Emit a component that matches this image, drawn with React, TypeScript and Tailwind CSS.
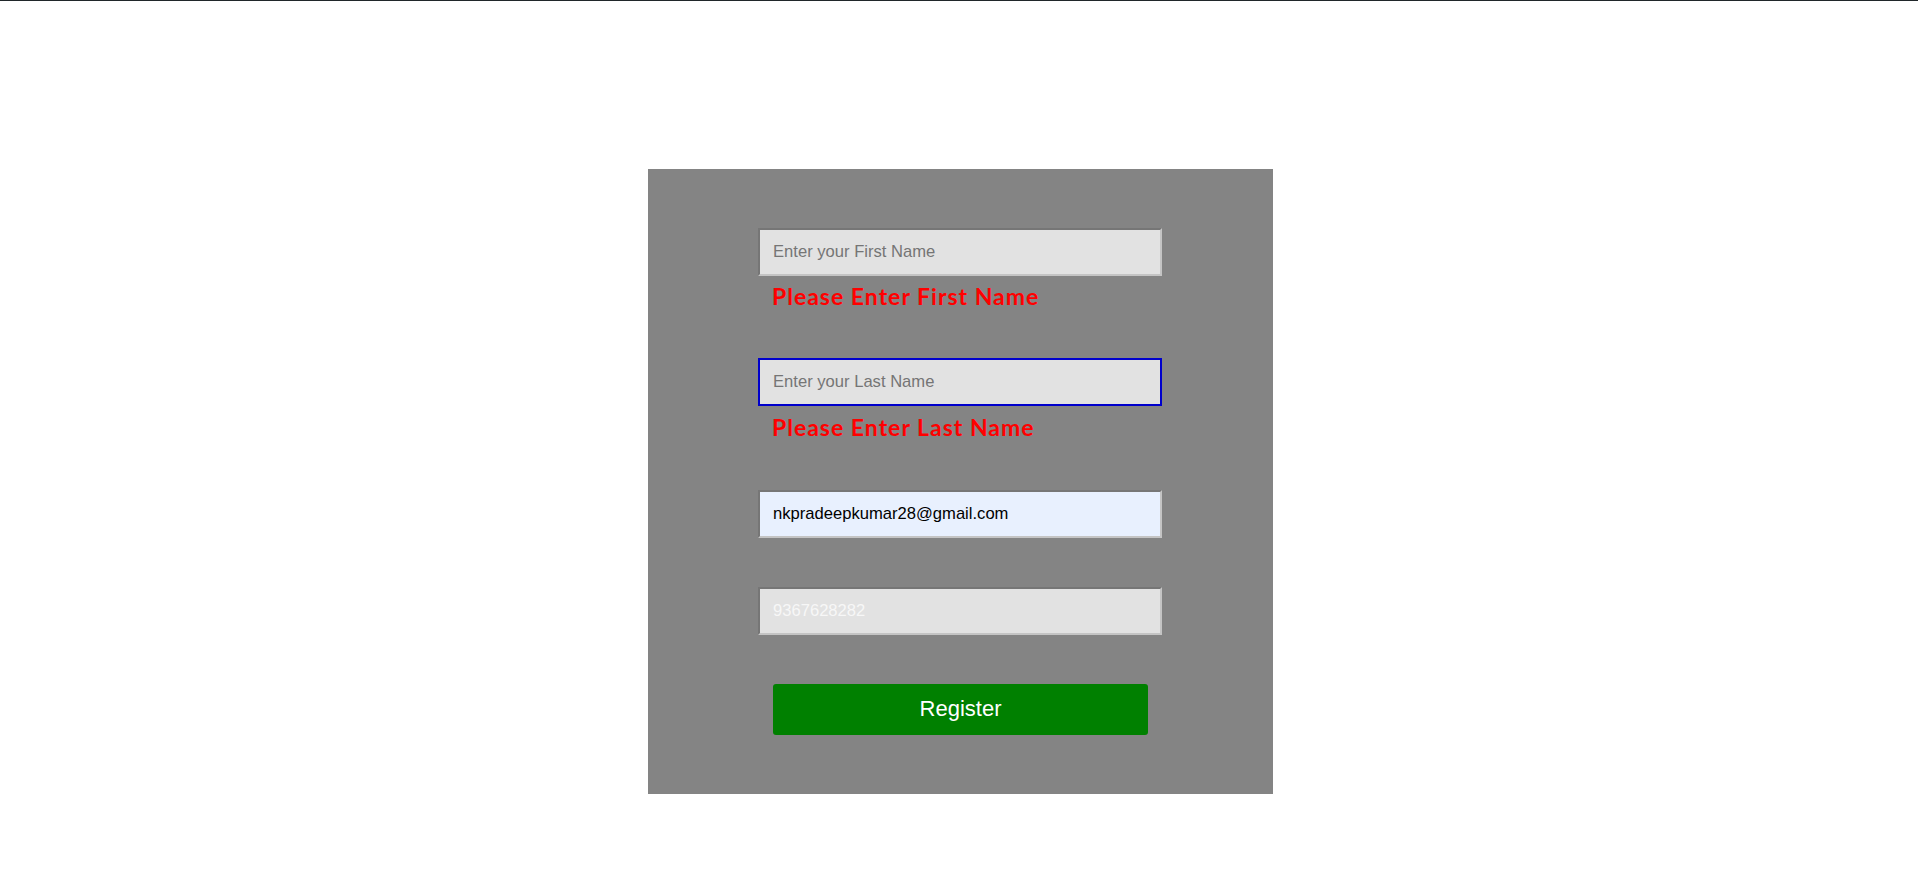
import React from "react";

const inputBase =
  "block w-[404px] h-[48px] px-[13px] text-[16.6px] outline-none [font-family:'Liberation_Sans',Arial,sans-serif]";
const insetBorder =
  "border-2 border-solid border-t-[#767676] border-l-[#767676] border-b-[#c4c4c4] border-r-[#c4c4c4]";

function ErrorText({ children, mt }: { children: React.ReactNode; mt: string }) {
  return (
    <p
      className={`w-[404px] pl-[14px] h-[28px] leading-[28px] text-[23px] font-bold tracking-[1px] text-[#ff0000] [font-family:Lato,'Noto_Sans',sans-serif] ${mt}`}
    >
      {children}
    </p>
  );
}

export default function App() {
  return (
    <div className="min-h-[877px] w-full bg-white border-t border-[#20272a]">
      <div className="pl-[648px] pt-[168px]">
        <form
          className="w-[625px] h-[625px] bg-[#848484] flex flex-col items-start pl-[110px] pt-[59px]"
          onSubmit={(e) => e.preventDefault()}
        >
          <input
            type="text"
            placeholder="Enter your First Name"
            readOnly
            className={`${inputBase} ${insetBorder} bg-[#e2e2e2] placeholder:text-[#757575]`}
          />
          <ErrorText mt="mt-[6px]">Please Enter First Name</ErrorText>

          <input
            type="text"
            placeholder="Enter your Last Name"
            readOnly
            className={`${inputBase} mt-[48px] border-2 border-solid border-[#0000cc] bg-[#e2e2e2] placeholder:text-[#757575]`}
          />
          <ErrorText mt="mt-[7px]">Please Enter Last Name</ErrorText>

          <input
            type="email"
            value="nkpradeepkumar28@gmail.com"
            readOnly
            className={`${inputBase} mt-[49px] ${insetBorder} bg-[#e8f0fe] text-black`}
          />

          <input
            type="text"
            value="9367628282"
            readOnly
            className={`${inputBase} mt-[49px] ${insetBorder} bg-[#e2e2e2] text-[#f7f7f7]`}
          />

          <button
            type="submit"
            className="mt-[49px] ml-[15px] w-[375px] h-[51px] rounded-[3px] bg-[#008000] text-white text-[22px] leading-[47px] pb-[2px] [font-family:'Liberation_Sans',Arial,sans-serif]"
          >
            Register
          </button>
        </form>
      </div>
    </div>
  );
}
